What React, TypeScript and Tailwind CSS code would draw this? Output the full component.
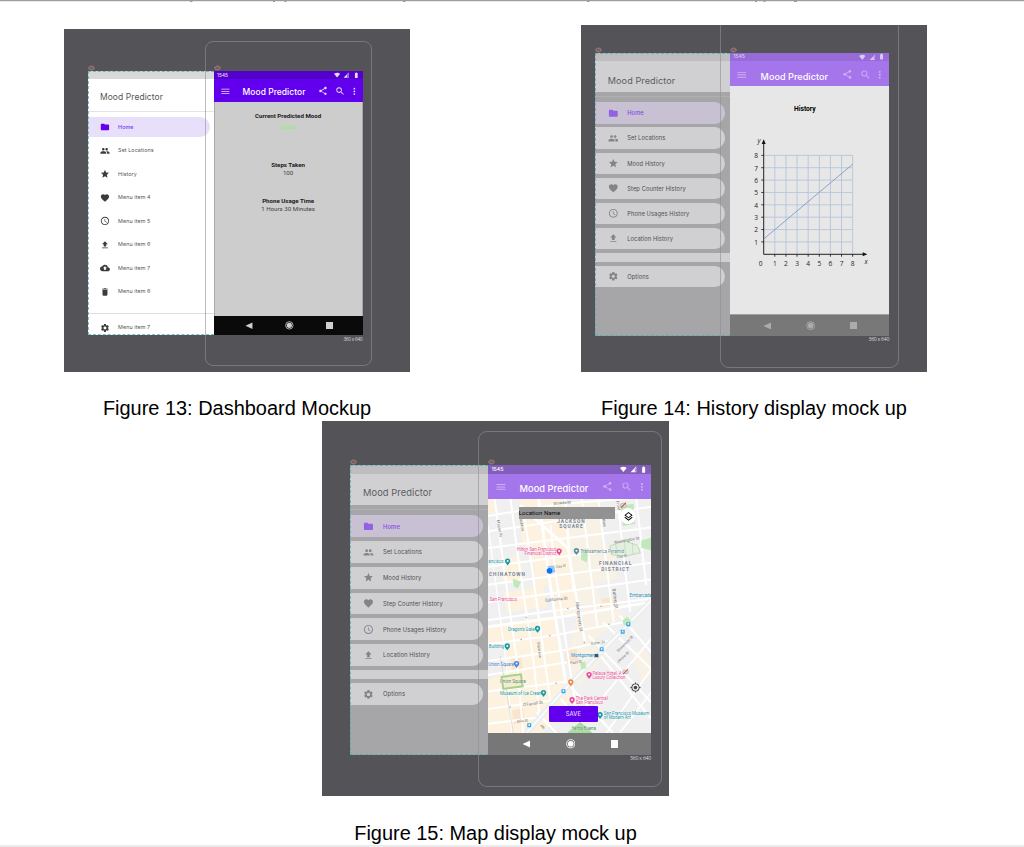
import React from "react";
import type { ReactNode } from "react";
import type { IconType } from "react-icons";
import {
  MdAccessTime,
  MdBackup,
  MdBatteryFull,
  MdDelete,
  MdFavorite,
  MdFileUpload,
  MdFolder,
  MdGroup,
  MdMenu,
  MdMoreVert,
  MdMyLocation,
  MdNetworkCell,
  MdOutlineLayers,
  MdSearch,
  MdSettings,
  MdShare,
  MdSignalWifi4Bar,
  MdStar,
} from "react-icons/md";

/* Frames are sized in em, where 1em stands for 10dp of the 360 x 640 device. */

type Item = { icon: IconType; label: string };

const plainItems: Item[] = [
  { icon: MdGroup, label: "Set Locations" },
  { icon: MdStar, label: "History" },
  { icon: MdFavorite, label: "Menu item 4" },
  { icon: MdAccessTime, label: "Menu item 5" },
  { icon: MdFileUpload, label: "Menu item 6" },
  { icon: MdBackup, label: "Menu item 7" },
  { icon: MdDelete, label: "Menu item 6" },
];

const historyItems: Item[] = [
  { icon: MdGroup, label: "Set Locations" },
  { icon: MdStar, label: "Mood History" },
  { icon: MdFavorite, label: "Step Counter History" },
  { icon: MdAccessTime, label: "Phone Usages History" },
  { icon: MdFileUpload, label: "Location History" },
];

function HiddenMark({ className }: { className: string }) {
  return (
    <svg viewBox="0 0 14 12" className={"absolute h-[6px] w-[7px] " + className}>
      <path d="M1 6c3-5 9-5 12 0-3 5-9 5-12 0z" fill="#5c5c60" stroke="#a5a5a8" strokeWidth="1.4" />
      <path d="M2.500 10.500 11.500 1.500" stroke="#e0503c" strokeWidth="1.8" />
    </svg>
  );
}

function Row({ item, className, iconClass, textClass }: { item: Item; className: string; iconClass: string; textClass: string }) {
  const Icon = item.icon;
  return (
    <div className={"flex shrink-0 items-center pl-[2.74em] " + className}>
      <Icon className={"h-[2.4em] w-[2.4em] " + iconClass} />
      <span className={"ml-[2.05em] pt-[0.1em] leading-none " + textClass}>
        <span className="block text-[1.3em] tracking-[0.015em] whitespace-nowrap">{item.label}</span>
      </span>
    </div>
  );
}

function Frame({ children }: { children: ReactNode }) {
  return (
    <div className="relative w-[30.3em] shrink-0">
      {children}
      <div className="absolute inset-0 border border-r-0 border-dashed border-[#4fb0b4]/75" />
      <HiddenMark className="-top-[6px] left-0" />
    </div>
  );
}

function LightDrawer() {
  return (
    <Frame>
      <div className="flex h-[64em] flex-col overflow-hidden bg-white">
        <div className="h-[2em] shrink-0 bg-[#d9d9d9]" />
        <div className="flex h-[8em] shrink-0 items-center border-b border-[#e4e4e4] pt-[0.8em] pl-[2.8em] text-[#555]">
          <span className="text-[2.05em] leading-none tracking-[0.01em]">Mood Predictor</span>
        </div>
        <Row
          item={{ icon: MdFolder, label: "Home" }}
          className="mt-[1.2em] mb-[0.45em] h-[4.8em] w-[29.4em] rounded-r-full bg-[#e8dffb]"
          iconClass="text-[#6200ee]"
          textClass="font-medium text-[#7a2ff0]"
        />
        {plainItems.map((item, i) => (
          <Row key={i} item={item} className="h-[5.7em]" iconClass="text-[#3c3c3c]" textClass="text-[#555]" />
        ))}
        <div className="mt-[2.2em] h-px shrink-0 bg-[#dedede]" />
        <Row item={{ icon: MdSettings, label: "Menu item 7" }} className="mt-[0.8em] h-[5em]" iconClass="text-[#3c3c3c]" textClass="text-[#555]" />
      </div>
    </Frame>
  );
}

function DimDrawer() {
  return (
    <Frame>
      <div className="flex h-[64em] flex-col overflow-hidden bg-[#a6a6a8]">
        <div className="h-[2em] shrink-0 bg-[#bebec0]" />
        <div className="flex h-[6.95em] shrink-0 items-center bg-[#d0d0d2] pt-[1.5em] pl-[2.8em] text-[#5c5c5e]">
          <span className="text-[2.05em] leading-none tracking-[0.01em]">Mood Predictor</span>
        </div>
        <div className="mt-[0.9em] h-px shrink-0 bg-[#b0b0b2]" />
        <div className="flex flex-col gap-[0.88em] pt-[1.15em]">
          <Row
            item={{ icon: MdFolder, label: "Home" }}
            className="h-[4.8em] w-[29.3em] rounded-r-full bg-[#c7c1d3]"
            iconClass="text-[#9362e0]"
            textClass="font-medium text-[#8a45e6]"
          />
          {historyItems.map((item) => (
            <Row
              key={item.label}
              item={item}
              className="h-[4.8em] w-[29.3em] rounded-r-full bg-[#d0d0d2]"
              iconClass="text-[#848486]"
              textClass="text-[#4e4e50]"
            />
          ))}
          <div className="h-[2.05em] bg-[#d0d0d2]" />
          <Row
            item={{ icon: MdSettings, label: "Options" }}
            className="h-[4.8em] w-[29.3em] rounded-r-full bg-[#d0d0d2]"
            iconClass="text-[#848486]"
            textClass="text-[#4e4e50]"
          />
        </div>
      </div>
    </Frame>
  );
}

type PhoneTone = { status: string; statusText: string; bar: string; barIcon: string; nav: string; navIcon: string };

const vivid: PhoneTone = {
  status: "bg-[#5300cb]",
  statusText: "text-[#e6dbfa]",
  bar: "bg-[#6200ee]",
  barIcon: "text-[#e6dbfa]",
  nav: "bg-[#0a0a0a]",
  navIcon: "text-[#cfcfcf]",
};
const faded: PhoneTone = {
  status: "bg-[#976cd8]",
  statusText: "text-[#d9c9f1]",
  bar: "bg-[#a575eb]",
  barIcon: "text-[#cdb2f4]",
  nav: "bg-[#787878]",
  navIcon: "text-[#acacac]",
};
const mapTone: PhoneTone = {
  status: "bg-[#835dbb]",
  statusText: "text-[#ffffff]",
  bar: "bg-[#a575eb]",
  barIcon: "text-[#cdb2f4]",
  nav: "bg-[#777777]",
  navIcon: "text-[#ffffff]",
};

function Phone({ tone, children }: { tone: PhoneTone; children: ReactNode }) {
  return (
    <div className="relative w-[36em] shrink-0">
      <HiddenMark className="-top-[6px] left-0" />
      <div className="flex h-[64em] flex-col">
        <div className={"flex h-[2em] shrink-0 items-center pr-[0.8em] pl-[0.8em] " + tone.status + " " + tone.statusText}>
          <span className="text-[1.15em] leading-none font-medium">1545</span>
          <div className="ml-auto flex items-center gap-[0.75em]">
            <MdSignalWifi4Bar className="h-[1.5em] w-[1.5em]" />
            <MdNetworkCell className="h-[1.5em] w-[1.5em]" />
            <MdBatteryFull className="h-[1.6em] w-[1.6em]" />
          </div>
        </div>
        <div className={"flex h-[5.6em] shrink-0 items-center pt-[0.2em] pr-[0.7em] pl-[1.5em] " + tone.bar + " " + tone.barIcon}>
          <MdMenu className="h-[2.6em] w-[2.6em]" />
          <div className="mt-[0.8em] ml-[2.9em] leading-none text-white">
            <span className="block text-[2.05em] leading-none font-medium tracking-[0.004em] whitespace-nowrap">Mood Predictor</span>
          </div>
          <MdShare className="ml-auto h-[2.4em] w-[2.4em]" />
          <MdSearch className="ml-[1.7em] h-[2.5em] w-[2.5em]" />
          <MdMoreVert className="ml-[0.85em] h-[2.6em] w-[2.6em]" />
        </div>
        <div className="min-h-0 grow">{children}</div>
        <div className={"flex h-[4.8em] shrink-0 items-center justify-between pr-[7.25em] pl-[7.6em] " + tone.nav + " " + tone.navIcon}>
          <svg viewBox="0 0 16 16" className="h-[1.8em] w-[1.8em]" fill="currentColor">
            <path d="M16 1v14L1 8z" />
          </svg>
          <svg viewBox="0 0 20 20" className="h-[2.1em] w-[2.1em]" fill="currentColor">
            <circle cx="10" cy="10" r="8.6" fill="none" stroke="currentColor" strokeWidth="1.8" />
            <circle cx="10" cy="10" r="6" />
          </svg>
          <div className="h-[1.6em] w-[1.6em] bg-current" />
        </div>
      </div>
      <div className="absolute top-full right-0 pt-[0.3em] font-['Open_Sans',sans-serif] text-[#dededf]">
        <span className="block text-[1.13em] leading-none tracking-[-0.04em] whitespace-nowrap">360 x 640</span>
      </div>
    </div>
  );
}

function Stat({ title, value, className, valueClass }: { title: string; value: string; className: string; valueClass: string }) {
  return (
    <div className={"flex flex-col items-center font-[Roboto,sans-serif] " + className}>
      <span className="text-[6.15px] leading-[8px] font-bold text-[#1a1a1a]">{title}</span>
      <span className={"text-[6.2px] leading-[8px] " + valueClass}>{value}</span>
    </div>
  );
}

function Dashboard() {
  return (
    <div className="h-full border border-y-0 border-[#a9a9a9] bg-[#cdcdcd] pt-[9.9px]">
      <Stat title="Current Predicted Mood" value="Good" className="gap-[3px]" valueClass="font-medium text-[#94ee7a]" />
      <Stat title="Steps Taken" value="100" className="mt-[29.5px]" valueClass="text-[#444]" />
      <Stat title="Phone Usage Time" value="1 Hours 30 Minutes" className="mt-[20px]" valueClass="text-[#444]" />
    </div>
  );
}

const ticks = [1, 2, 3, 4, 5, 6, 7, 8];

function HistoryChart() {
  return (
    <svg viewBox="750 134 122 138" className="block h-[138px] w-[122px] font-['Open_Sans',sans-serif]">
      {ticks.map((t) => (
        <g key={t}>
          <path d={`M${763.7 + t * 11.12} 155.3V254.3M763.7 ${254.3 - t * 12.37}H852.7`} stroke="#b6c4da" strokeWidth="0.9" />
          <path d={`M${763.7 + t * 11.12} 254.3v2.400M763.7 ${254.3 - t * 12.37}h-2.400`} stroke="#222" strokeWidth="0.9" />
          <text x={763.7 + t * 11.12} y="266" fontSize="6.6" textAnchor="middle" fill="#222">{t}</text>
          <text x="758" y={257.2 - t * 12.37} fontSize="6.6" textAnchor="end" fill="#222">{t}</text>
        </g>
      ))}
      <path d="M763.7 254.3V143M763.7 254.3H863" stroke="#222" strokeWidth="1" fill="none" />
      <path d="M763.7 139.3l-2 4.6h4zM867.3 254.3l-4.6-2v4z" fill="#111" />
      <path d="M763.7 239 852.7 164.2" stroke="#7f9cc9" strokeWidth="0.9" />
      <text x="760.6" y="266" fontSize="6.6" textAnchor="middle" fill="#222">0</text>
      <text x="759" y="143" fontSize="6.6" fontStyle="italic" textAnchor="middle" fill="#222">y</text>
      <text x="866" y="264" fontSize="6.6" fontStyle="italic" textAnchor="middle" fill="#222">x</text>
    </svg>
  );
}

function HistoryScreen() {
  return (
    <div className="flex h-full flex-col border-b border-[#a0a0a0] bg-[#e7e7e7] pt-[18.5px]">
      <span className="self-center pr-[9px] font-[Roboto,sans-serif] text-[6.7px] leading-[8px] font-bold text-black">History</span>
      <div className="mt-[21px] ml-[20.3px]">
        <HistoryChart />
      </div>
    </div>
  );
}

function Pin({ x, y, color }: { x: number; y: number; color: string }) {
  return (
    <g transform={`translate(${x} ${y})`}>
      <path d="M0 11C-3 6-8 4-8-2a8 8 0 0 1 16 0c0 6-5 8-8 13z" fill={color} />
      <circle cy="-2" r="3" fill="#fff" />
    </g>
  );
}

function Stop({ x, y }: { x: number; y: number }) {
  return (
    <g>
      <rect x={x - 6} y={y - 6} width="12" height="12" rx="1.5" fill="#35a4e6" />
      <rect x={x - 2.5} y={y - 4} width="5" height="6" fill="#d9effc" />
    </g>
  );
}

function Slash({ x, y }: { x: number; y: number }) {
  return (
    <g transform={`translate(${x} ${y})`}>
      <ellipse rx="9" ry="6" fill="#ddd" stroke="#999" strokeWidth="1.5" />
      <path d="M-7 7 8-8" stroke="#e0392b" strokeWidth="3" />
    </g>
  );
}

function CityMap() {
  const teal = "#1a9aa6";
  const pink = "#ea4b96";
  const road = "#6f6f6f";
  return (
    <svg viewBox="24 221 491 701" preserveAspectRatio="none" className="block h-full w-full font-[Roboto,sans-serif]">
      <rect x="24" y="221" width="491" height="701" fill="#f0f0f0" />
      {/* commercial blocks */}
      <g fill="#fcf2df">
        <path d="M24 221h20l6 40-26 4zM120 221h130l10 100 12 110 20 130-60 8-14-90-50 6-20-90-24-60z" />
        <path d="M255 240l100-14 12 130 40 6 8 100-60 8 6 60-80 10-16-120z" opacity=".6" />
        <path d="M24 600l200-30 24 180 30 70-90 102H24V760l60-20-10-90-50 6z" />
        <path d="M60 400l60-8 12 70-66 8zM70 500l120-16 10 60-120 16z" />
        <path d="M300 540l120-20 8 50-90 80 40 40-80 90-40-60z" opacity=".6" />
        <path d="M455 680l40-10 20 30v50l-30 20z" opacity=".6" />
      </g>
      <g fill="#fae4cc">
        <path d="M365 520l32-5 4 24-32 5zM256 672l34-5 6 38-36 5zM92 698l32-5 4 36-32 5zM96 854l34-5 5 40-34 6z" />
      </g>
      {/* street grid */}
      <g stroke="#fff" fill="none" strokeWidth="6">
        <path d="M24 272 240 236 515 214M24 318 200 292 515 244M24 368 515 306M24 424 515 358M24 478 515 412M24 530 515 462M24 584 220 556 515 520" />
        <path d="M24 604 220 578 515 530" strokeWidth="8" />
        <path d="M24 656 220 630 430 590M24 706 240 676 410 640M24 748 262 710M24 798 262 768M24 850 230 822M24 894 170 876" />
        <path d="M44 221 60 340 110 700 130 922M92 221 112 380 160 700 178 860M130 250 158 440 212 830M212 300 224 420 290 860M306 221 340 500 352 600" />
        <path d="M24 300 80 720 96 922" strokeWidth="4" />
        <path d="M176 221 214 495 262 795" strokeWidth="9" />
        <path d="M255 221 272 420 316 650" strokeWidth="8" />
        <path d="M356 221 388 480 402 590M414 221 432 400 452 560M470 221 500 480" />
        <path d="M120 240 266 370 284 500" strokeWidth="9" />
        <path d="M326 630 515 830M362 690 515 880M260 770 400 922M230 805 330 922M370 590 515 730M420 570 515 680M170 860 230 922" />
        <path d="M515 640 280 922M515 730 380 922M515 800 420 922" strokeWidth="5" />
      </g>
      <path d="M515 525 250 796 140 922" stroke="#eceef0" strokeWidth="18" fill="none" />
      <path d="M515 525 250 796 140 922" stroke="#fff" strokeWidth="4" fill="none" />
      <path d="M60 690 80 800 100 922" stroke="#c9c9c9" strokeWidth="1.5" fill="none" />
      {/* parks */}
      <g fill="#c0e8bb">
        <path d="M422 240l40-4 4 60-36 6zM485 345l30-8v38l-30-8zM304 372l22-3-4 42-18-8zM98 460l26 8-10 20-12-4zM428 586l14-12 14 14-10 12-14-2zM302 712l14-4 4 20-16 4z" />
        <path d="M262 922l40-34 36 34z" fill="#a9dba0" />
        <path d="M390 362l44-16 40 14 8 22-42 10-44-4z" fill="#e3f0e0" stroke="#a9cfa4" strokeWidth="2" />
        <path d="M408 356l6 32M434 346l4 44M458 352l2 34" stroke="#a9cfa4" strokeWidth="1.5" />
      </g>
      <path d="M65 754l58-8 5 36-58 8z" fill="#f3ecd0" stroke="#a6d28b" strokeWidth="6" />
      {/* one-way marks */}
      <g fill="#a8aab4">
        <path d="M120 642l6-3v6zM206 631l6-3v6zM260 549l6-3v6zM384 596l6-3v6zM360 542l6-3v6zM136 576l6-3v6zM310 651l6-3v6zM225 773l6-3v6zM86 844l6-3v6zM400 537l6-3v6z" />
      </g>
      {/* street names */}
      <g fontSize="12" fill={road}>
        <text transform="translate(222 239) rotate(-6)">Broadway</text>
        <text transform="translate(118 270) rotate(82)">Stockton</text>
        <text transform="translate(50 285) rotate(80)">Mason St</text>
        <text transform="translate(366 268) rotate(82)">Battery</text>
        <text transform="translate(410 228) rotate(80)">Front</text>
        <text transform="translate(404 355) rotate(-10)">Washington St</text>
        <text transform="translate(412 398) rotate(-8)" fontSize="10">Clay St</text>
        <text transform="translate(228 428) rotate(-8)" fontSize="10">Clay St</text>
        <text transform="translate(398 490) rotate(82)" fontSize="14">Battery St</text>
        <text transform="translate(196 529) rotate(-6)" fontSize="12.5">California St</text>
        <text transform="translate(288 530) rotate(82)" fontSize="13">Montgomery St</text>
        <text transform="translate(334 658) rotate(-8)" fontSize="11">Sutter St</text>
        <text transform="translate(272 716) rotate(-8)" fontSize="11">Post St</text>
        <text transform="translate(172 650) rotate(84)" fontSize="11">Grant Ave</text>
        <text transform="translate(130 842) rotate(-8)" fontSize="12.5">O'Farrell St</text>
        <text transform="translate(112 891) rotate(-6)" fontSize="11">Ellis St</text>
        <text transform="translate(180 900) rotate(48)" fontSize="11">4th</text>
        <text transform="translate(416 680) rotate(-45)" fontSize="11">Stevenson St</text>
        <text transform="translate(416 712) rotate(-42)" fontSize="11">Jessie St</text>
      </g>
      {/* districts */}
      <g fontSize="14.5" fontWeight="700" fill="#76859b" letterSpacing="2.9" textAnchor="middle" stroke="#f6f3ec" strokeWidth="2" paintOrder="stroke">
        <text x="275" y="292">JACKSON</text>
        <text x="275" y="308">SQUARE</text>
        <text x="408" y="420">FINANCIAL</text>
        <text x="408" y="437">DISTRICT</text>
        <text x="27" y="451" textAnchor="start">CHINATOWN</text>
      </g>
      {/* places */}
      <g fontSize="13.4" letterSpacing="-0.15" stroke="#fff" strokeWidth="1" paintOrder="stroke">
        <g fill={pink}>
          <text x="230" y="377" textAnchor="end">Hilton San Francisco</text>
          <text x="230" y="390" textAnchor="end">Financial District</text>
          <text x="29" y="526">San Francisco</text>
          <text x="338" y="747">Palace Hotel, A</text>
          <text x="338" y="760">Luxury Collection</text>
          <text x="288" y="823">The Park Central</text>
          <text x="288" y="836">San Francisco</text>
        </g>
        <text x="302" y="383" fill="#5f8592">Transamerica Pyramid</text>
        <g fill={teal}>
          <text x="25" y="414">ancisco</text>
          <text x="84" y="615">Dragon's Gate</text>
          <text x="26" y="668">Building</text>
          <text x="60" y="808">Museum of Ice Cream</text>
          <text x="372" y="868">San Francisco Museum</text>
          <text x="372" y="881">of Modern Art</text>
          <text x="274" y="695" fill="#1782b8">Montgomery</text>
          <text x="450" y="514" fill="#1b8fb8">Embarcade</text>
          <text x="25" y="720" fill="#3d78c4">Union Square</text>
        </g>
        <g fill="#388a4c">
          <text x="60" y="771" fill="#587f45">Union Square</text>
          <text x="275" y="914">Yerba Buena</text>
        </g>
      </g>
      <Pin x={238} y={379} color={pink} />
      <Pin x={290} y={378} color="#5d8c9a" />
      <Pin x={83} y={409} color={teal} />
      <Pin x={173} y={611} color={teal} />
      <Pin x={82} y={663} color={teal} />
      <Pin x={110} y={716} color="#4a86d8" />
      <Pin x={191} y={803} color={teal} />
      <Pin x={328} y={749} color={pink} />
      <Pin x={273} y={771} color="#f08a3c" />
      <Pin x={277} y={824} color={pink} />
      <Pin x={361} y={869} color={teal} />
      <Stop x={446} y={596} />
      <Stop x={429} y={619} />
      <Stop x={366} y={671} />
      <rect x="345" y="685" width="11" height="10" fill="#31596e" />
      <Stop x={251} y={797} />
      <Stop x={148} y={899} />
      <Slash x={431} y={240} />
      <Slash x={437} y={739} />
      <path d="M203 422l20-2 4 20-18 6z" fill="#9cc5f7" />
      <circle cx="209" cy="436" r="8.5" fill="#0a77f2" />
    </svg>
  );
}

function MapScreen() {
  return (
    <div className="relative h-full">
      <CityMap />
      <div className="absolute top-[7.5px] left-[31px] flex h-[12.5px] w-[96px] items-center bg-[#929292] font-[Roboto,sans-serif] text-[6.1px] leading-none text-[#0a0a0a]">
        Location Name
      </div>
      <div className="absolute top-[9.3px] left-[132.4px] flex size-[16px] items-center justify-center rounded-full bg-white text-black">
        <MdOutlineLayers className="size-[11px]" />
      </div>
      <MdMyLocation className="absolute top-[183px] left-[141.8px] size-[11px] text-[#444]" />
      <div className="absolute top-[207px] left-[61.3px] flex h-[16.3px] w-[48.7px] items-center justify-center rounded-[1.3px] bg-[#6200ee] text-[5.7px] leading-none font-medium tracking-[0.03em] text-[#e6d8fd]">
        SAVE
      </div>
    </div>
  );
}

function Figure({ caption, canvas, outline, captionClass, children }: { caption: string; canvas: string; outline: string; captionClass: string; children: ReactNode }) {
  return (
    <figure className="flex flex-col items-center">
      <div className={"relative flex items-start overflow-hidden bg-[#545358] font-[Inter,sans-serif] " + canvas}>
        {children}
        <div className={"pointer-events-none absolute border border-[#8f8f94]/60 " + outline} />
      </div>
      <figcaption className={"font-['Liberation_Sans',sans-serif] text-[19.95px] leading-[24px] whitespace-nowrap text-black " + captionClass}>
        {caption}
      </figcaption>
    </figure>
  );
}

export default function App() {
  return (
    <div className="flex h-[847px] w-[1024px] flex-col overflow-hidden bg-white">
      <svg viewBox="0 0 1024 3" className="block h-[3px] w-full shrink-0">
        <rect width="1024" height="1.2" fill="#9d9d9d" />
        <path d="M190 1.5h2.500M273 1.500h2M284.500 1.500h2M403 1.500h2.500M587 1.500h2.500M755 1.500h2M763.500 1.500h2M794 1.500h3" stroke="#999" strokeWidth="1" />
      </svg>
      <div className="flex h-[418px] shrink-0 items-start pl-[64px]">
        <div className="w-[346px] pt-[26px]">
          <Figure
            caption="Figure 13: Dashboard Mockup"
            canvas="h-[343px] w-[346px] pt-[41.8px] pl-[24.4px] text-[4.135px]"
            outline="left-[141px] top-[12px] h-[325px] w-[167px] rounded-[8px]"
            captionClass="mt-[24px]"
          >
            <LightDrawer />
            <Phone tone={vivid}>
              <Dashboard />
            </Phone>
          </Figure>
        </div>
        <div className="ml-[171px] w-[346px] pt-[22px]">
          <Figure
            caption="Figure 14: History display mock up"
            canvas="h-[347px] w-[346px] pt-[27.6px] pl-[14.4px] text-[4.43px]"
            outline="left-[139px] -top-[7px] h-[350px] w-[179px] rounded-[9px]"
            captionClass="mt-[24px]"
          >
            <DimDrawer />
            <Phone tone={faded}>
              <HistoryScreen />
            </Phone>
          </Figure>
        </div>
      </div>
      <div className="ml-[322px] w-[347px] shrink-0">
        <Figure
          caption="Figure 15: Map display mock up"
          canvas="h-[375px] w-[347px] pt-[43.6px] pl-[28.4px] text-[4.535px]"
          outline="left-[156px] top-[10px] h-[356px] w-[184px] rounded-[9px]"
          captionClass="mt-[25px]"
        >
          <DimDrawer />
          <Phone tone={mapTone}>
            <MapScreen />
          </Phone>
        </Figure>
      </div>
      <div className="mt-auto mb-[1px] h-[2px] shrink-0 bg-[#ececec]" />
    </div>
  );
}
